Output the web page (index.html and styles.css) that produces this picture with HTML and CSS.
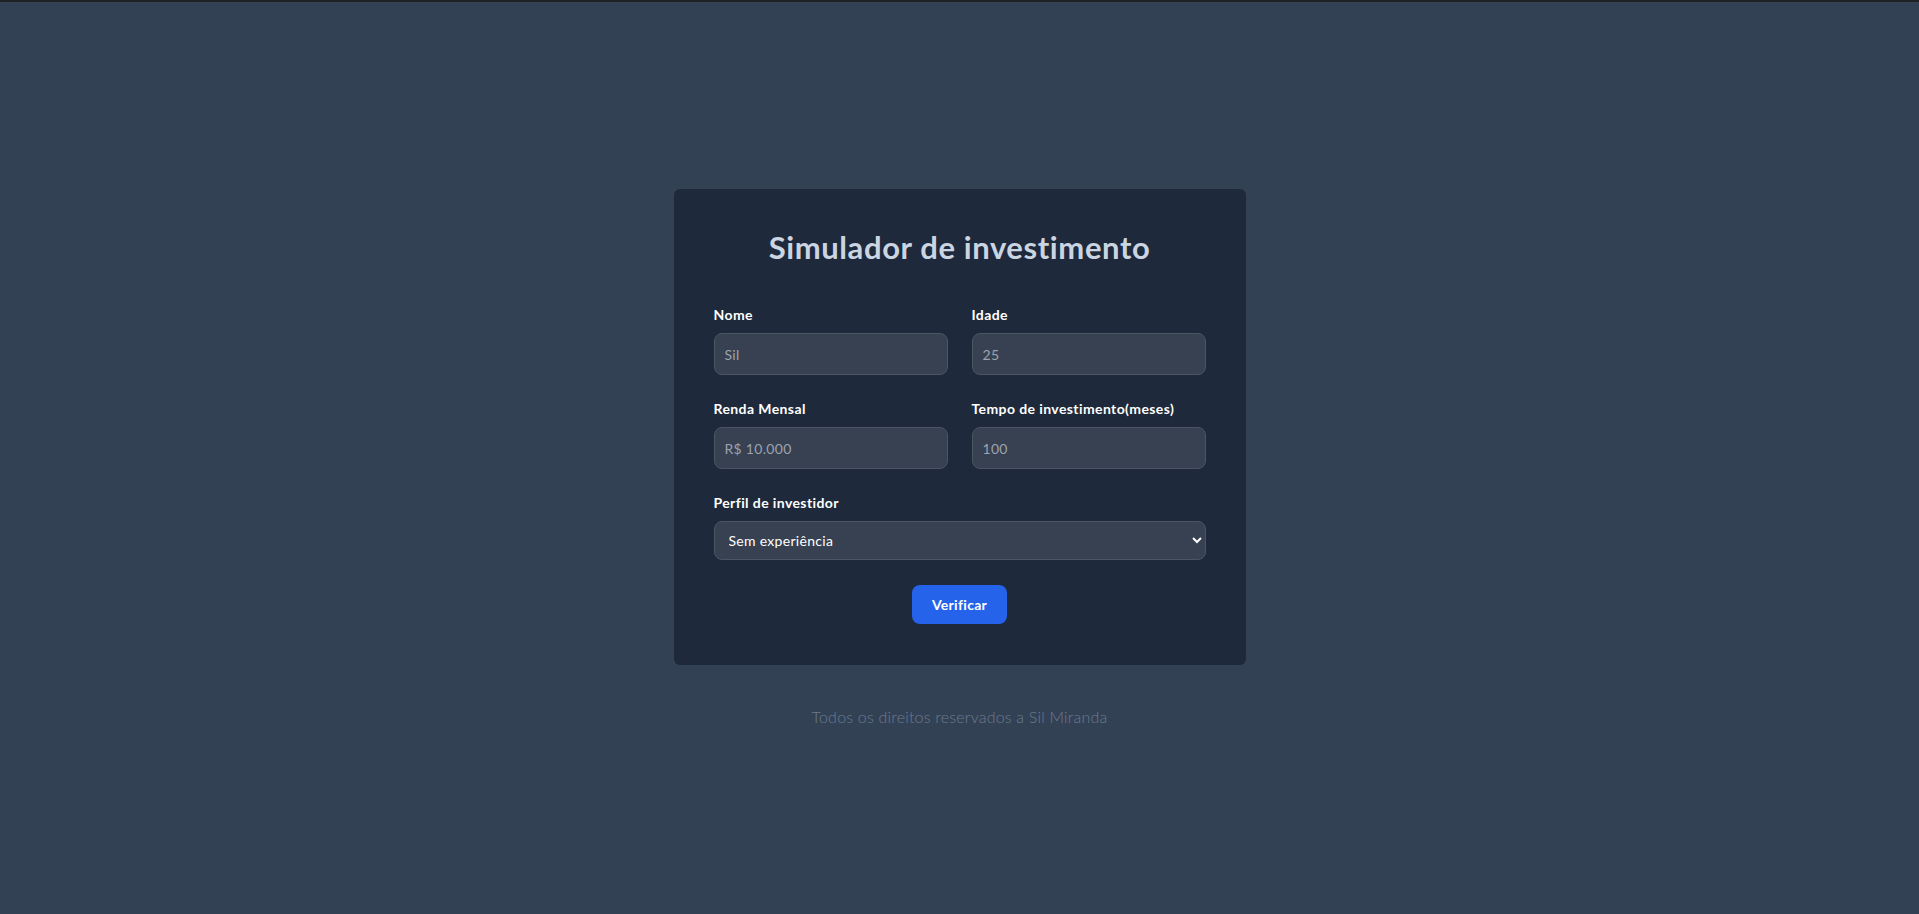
FILE: index.html
```html
<!DOCTYPE html>
<html lang="pt-BR">
<head>
<meta charset="utf-8">
<title>Simulador de investimento</title>
<link rel="stylesheet" href="styles.css">
</head>
<body>
<div class="topbar"></div>
<main class="page">
  <section class="card">
    <h1 class="title">Simulador de investimento</h1>
    <form class="form">
      <div class="row">
        <div class="field">
          <label class="label" for="nome">Nome</label>
          <input class="input" id="nome" type="text" placeholder="Sil">
        </div>
        <div class="field">
          <label class="label" for="idade">Idade</label>
          <input class="input" id="idade" type="text" placeholder="25">
        </div>
      </div>
      <div class="row">
        <div class="field">
          <label class="label" for="renda">Renda Mensal</label>
          <input class="input" id="renda" type="text" placeholder="R$ 10.000">
        </div>
        <div class="field">
          <label class="label" for="tempo">Tempo de investimento(meses)</label>
          <input class="input" id="tempo" type="text" placeholder="100">
        </div>
      </div>
      <div class="field field-full">
        <label class="label" for="perfil">Perfil de investidor</label>
        <select class="select" id="perfil">
          <option>Sem experiência</option>
          <option>Conservador</option>
          <option>Moderado</option>
          <option>Arrojado</option>
        </select>
      </div>
      <div class="actions">
        <button class="button" type="button">Verificar</button>
      </div>
    </form>
  </section>
  <p class="footer">Todos os direitos reservados a Sil Miranda</p>
</main>
</body>
</html>
```
FILE: styles.css
```css
* { box-sizing: border-box; }
html, body { margin: 0; padding: 0; }
body {
  background: #334155;
  font-family: Lato, "Open Sans", "Liberation Sans", sans-serif;
  min-height: 100vh;
  display: flex;
  flex-direction: column;
}
.topbar {
  height: 2px;
  background: #1f2125;
  flex: none;
}
.page {
  flex: 1;
  display: flex;
  flex-direction: column;
  align-items: center;
  justify-content: center;
  padding-top: 2px;
}
.card {
  width: 572px;
  background: #1e293b;
  border-radius: 6px;
  padding: 40px 40px 41px;
}
.title {
  margin: 0 0 40px;
  text-align: center;
  font-size: 31px;
  line-height: 36px;
  font-weight: 700;
  letter-spacing: 0.6px;
  color: #cbd5e1;
}
.form { margin: 0; }
.row {
  display: grid;
  grid-template-columns: 1fr 1fr;
  column-gap: 24px;
  margin-bottom: 24px;
}
.field { display: flex; flex-direction: column; }
.field-full { margin-bottom: 25px; }
.label {
  font-size: 14px;
  line-height: 20px;
  font-weight: 700;
  letter-spacing: 0.4px;
  color: #ffffff;
  margin-bottom: 8px;
}
.input {
  height: 42px;
  padding: 0 10px;
  background: #374151;
  border: 1px solid #4b5563;
  border-radius: 8px;
  color: #ffffff;
  font-family: inherit;
  font-size: 14px;
  letter-spacing: 0.3px;
  outline: none;
}
.input::placeholder { color: #9ca3af; }
.select {
  height: 39px;
  padding: 0 10px;
  background-color: #374151;
  border: 1px solid #4b5563;
  border-radius: 8px;
  color: #ffffff;
  font-family: inherit;
  font-size: 14px;
  letter-spacing: 0.3px;
  outline: none;
  width: 100%;
}
.actions { display: flex; justify-content: center; }
.button {
  height: 39px;
  padding: 0 20px;
  background: #2563eb;
  color: #ffffff;
  border: none;
  border-radius: 8px;
  font-family: inherit;
  font-size: 14px;
  font-weight: 700;
  letter-spacing: 0.3px;
  cursor: pointer;
}
.footer {
  margin: 40px 0 0;
  font-size: 16px;
  line-height: 24px;
  font-weight: 300;
  letter-spacing: 0.2px;
  color: #6b7a8f;
}
```
